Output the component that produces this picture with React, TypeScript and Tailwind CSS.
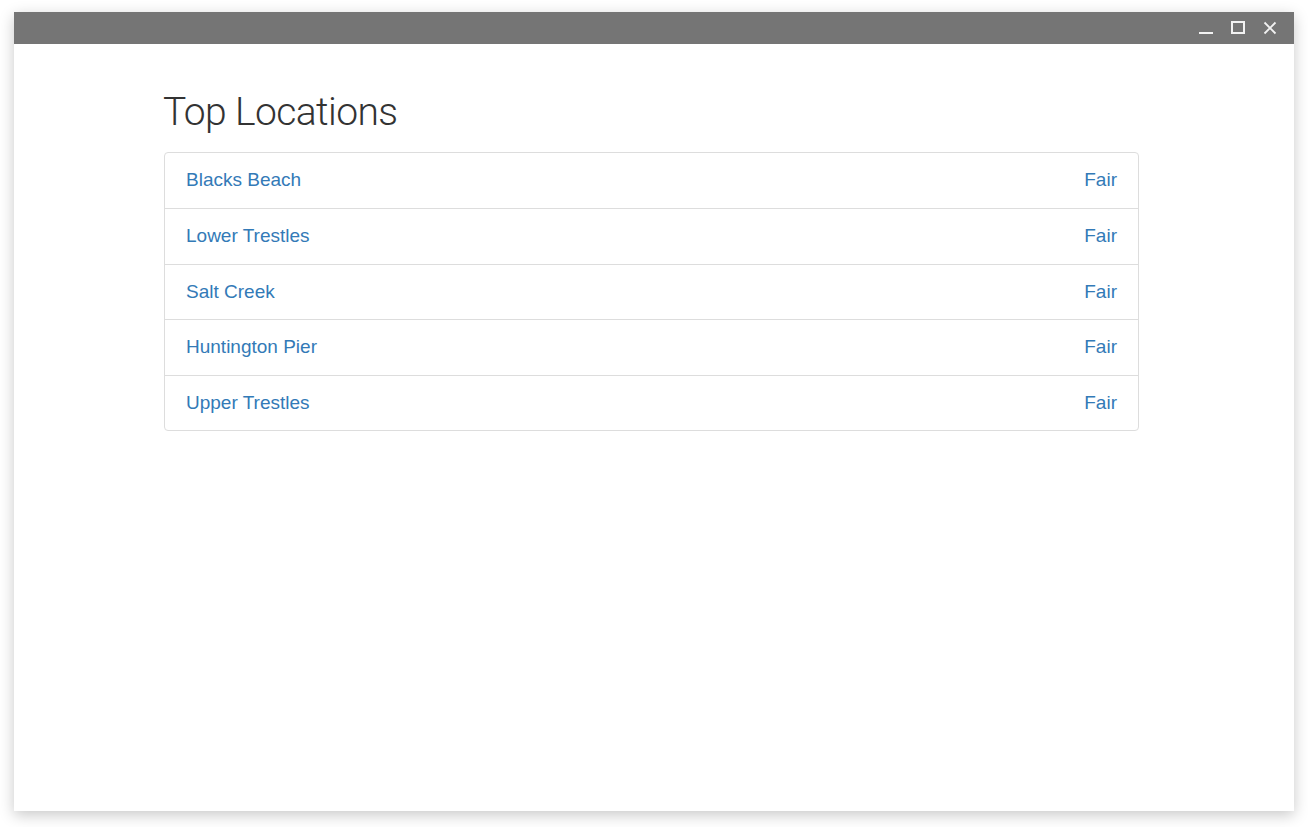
const locations = [
  { name: 'Blacks Beach', rating: 'Fair' },
  { name: 'Lower Trestles', rating: 'Fair' },
  { name: 'Salt Creek', rating: 'Fair' },
  { name: 'Huntington Pier', rating: 'Fair' },
  { name: 'Upper Trestles', rating: 'Fair' },
]

function TitleBar() {
  return (
    <div className="flex h-[32px] items-center justify-end bg-[#757575] pr-[8px]">
      <button className="flex h-[32px] w-[32px] items-center justify-center">
        <svg width="14" height="14" viewBox="0 0 14 14">
          <rect x="0" y="11" width="14" height="2" fill="#f2f2f2" />
        </svg>
      </button>
      <button className="flex h-[32px] w-[32px] items-center justify-center">
        <svg width="14" height="14" viewBox="0 0 14 14">
          <rect x="1" y="1" width="12" height="11" fill="none" stroke="#f2f2f2" strokeWidth="2" />
        </svg>
      </button>
      <button className="flex h-[32px] w-[32px] items-center justify-center">
        <svg width="14" height="14" viewBox="0 0 14 14">
          <path d="M1.5 1.5 L12.5 12.5 M12.5 1.5 L1.5 12.5" stroke="#f2f2f2" strokeWidth="1.8" />
        </svg>
      </button>
    </div>
  )
}

export default function App() {
  return (
    <div className="h-[827px] w-[1308px] bg-white pl-[14px] pt-[12px]">
      <div className="flex h-[799px] w-[1280px] flex-col bg-white shadow-[0_4px_14px_rgba(0,0,0,0.22)]">
        <TitleBar />
        <main className="pl-[149px] pt-[44px]" style={{ fontFamily: '"Liberation Sans", Arial, sans-serif' }}>
          <h1
            className="text-[39px] font-light leading-[48px] tracking-[-0.6px] text-[#333]"
            style={{ fontFamily: 'Roboto, "Liberation Sans", sans-serif' }}
          >
            Top Locations
          </h1>
          <ul className="ml-[1px] mt-[16px] w-[975px] rounded-[4px] border border-[#ddd]">
            {locations.map((loc, i) => (
              <li
                key={loc.name}
                className={
                  'flex h-[55.4px] items-center justify-between px-[21px] text-[19px] text-[#337ab7] ' +
                  (i > 0 ? 'border-t border-[#ddd]' : '')
                }
              >
                <a href="#">{loc.name}</a>
                <span>{loc.rating}</span>
              </li>
            ))}
          </ul>
        </main>
      </div>
    </div>
  )
}
